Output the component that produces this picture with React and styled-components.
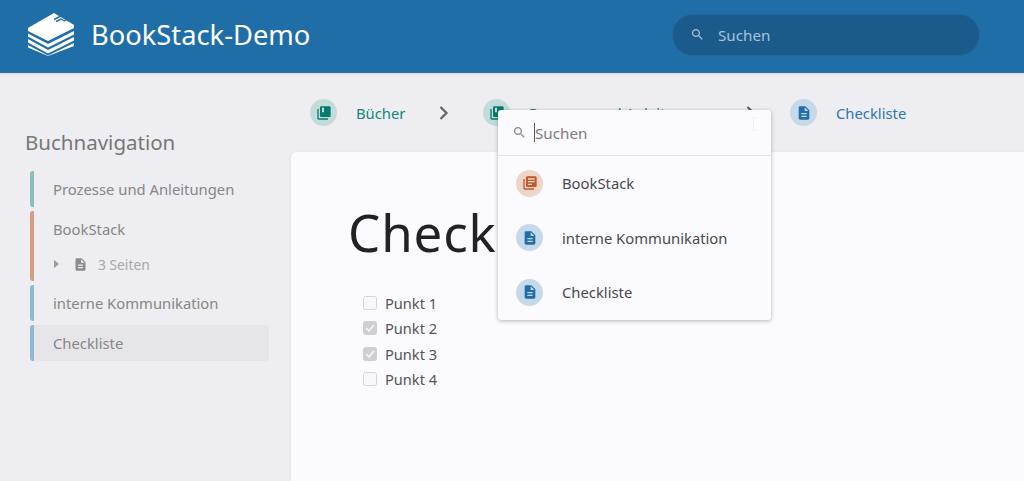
import React from "react";
import styled, { createGlobalStyle } from "styled-components";

const GlobalStyle = createGlobalStyle`
  html, body { margin: 0; padding: 0; height: 100%; overflow: hidden; }
  body {
    background: #eeedf2;
    font-family: "Noto Sans", "Open Sans", sans-serif;
    color: #444;
  }
`;

const PageIcon = () => (
  <svg viewBox="0 0 24 24" fill="currentColor">
    <path d="M14 2H6c-1.1 0-1.99.9-1.99 2L4 20c0 1.1.89 2 1.99 2H18c1.1 0 2-.9 2-2V8l-6-6zm2 16H8v-2h8v2zm0-4H8v-2h8v2zm-3-5V3.5L18.5 9H13z" />
  </svg>
);

const BookIcon = () => (
  <svg viewBox="0 0 24 24" fill="currentColor">
    <path d="M4 6H2v14c0 1.1.9 2 2 2h14v-2H4V6z" />
    <path d="M8 2h12c1.1 0 2 .9 2 2v12c0 1.1-.9 2-2 2H8c-1.1 0-2-.9-2-2V4c0-1.1.9-2 2-2zm1 2v7h3V4H9z" />
  </svg>
);

const ChapterIcon = () => (
  <svg viewBox="0 0 24 24" fill="currentColor">
    <path d="M4 6H2v14c0 1.1.9 2 2 2h14v-2H4V6zm16-4H8c-1.1 0-2 .9-2 2v12c0 1.1.9 2 2 2h12c1.1 0 2-.9 2-2V4c0-1.1-.9-2-2-2zm-1 9H9V9h10v2zm-4 4H9v-2h6v2zm4-8H9V5h10v2z" />
  </svg>
);

const SearchIcon = () => (
  <svg viewBox="0 0 24 24" fill="currentColor">
    <path d="M15.5 14h-.79l-.28-.27C15.41 12.59 16 11.11 16 9.5 16 5.91 13.09 3 9.5 3S3 5.91 3 9.5 5.91 16 9.5 16c1.61 0 3.09-.59 4.23-1.57l.27.28v.79l5 4.99L20.49 19l-4.99-5zm-6 0C7.01 14 5 11.99 5 9.5S7.01 5 9.5 5 14 7.01 14 9.5 11.99 14 9.5 14z" />
  </svg>
);

const Chevron = () => (
  <svg viewBox="0 0 12 16" fill="none" stroke="currentColor" strokeWidth="2.3">
    <path d="M2.5 2 8.5 8 2.5 14" />
  </svg>
);

const Logo = () => (
  <svg viewBox="0 0 46 43" width="46" height="43" fill="#fff">
    <path d="M0 15 26 0 46 12V15L20 28 0 18Z" />
    <path d="M26 6.5 35 2M28 8.5 33 6 36.5 8 39 5.5" fill="none" stroke="#206ea7" strokeWidth="1.4" />
    <path d="M0 20.5 20 31 46 18V21.5L20 34.5 0 23.5Z" />
    <path d="M0 26 20 37 46 24V27.5L20 40.5 0 29.5Z" />
    <path d="M0 32 20 42.5 46 30V33L20 43 0 34.5Z" />
  </svg>
);

const Header = styled.header`
  height: 73px;
  box-sizing: border-box;
  background: #206ea7;
  display: flex;
  align-items: center;
  padding: 0 0 4px 28px;
  box-shadow: 0 1px 3px 1px rgba(76, 76, 76, 0.1);
  position: relative;
  z-index: 2;
`;

const Brand = styled.div`
  display: flex;
  align-items: center;
  gap: 17px;
  width: 644px;
  color: #fff;
  font-size: 27.3px;
  line-height: 1;
`;

const HeaderSearch = styled.div`
  width: 308px;
  height: 42px;
  box-sizing: border-box;
  border-radius: 21px;
  background: #1a5b8b;
  border: 1px solid #24659a;
  display: flex;
  align-items: center;
  padding-left: 17px;
  gap: 13px;
  color: #a9c4d9;
  font-size: 15.2px;
  svg { width: 15px; height: 15px; }
`;

const Layout = styled.div`
  display: grid;
  grid-template-columns: 291px 1fr;
  height: 408px;
`;

const Sidebar = styled.aside`
  padding: 55px 22px 0 30px;
`;

const SideTitle = styled.h5`
  margin: 0 0 15px -5px;
  font-size: 20.5px;
  line-height: 28px;
  font-weight: 400;
  color: #777;
`;

const NavList = styled.div`
  display: flex;
  flex-direction: column;
  gap: 4px;
`;

const NavItem = styled.div`
  height: 36px;
  display: flex;
  align-items: center;
  padding-left: 19px;
  font-size: 14.8px;
  color: #868686;
  border-left: 4px solid ${(p) => p.$color};
  border-radius: 3px;
  background: ${(p) => (p.$active ? "#e6e5ea" : "transparent")};
`;

const NavGroup = styled.div`
  border-left: 4px solid #d59d82;
  border-radius: 3px;
`;

const GroupTitle = styled.div`
  height: 36px;
  display: flex;
  align-items: center;
  padding-left: 19px;
  font-size: 14.8px;
  color: #868686;
`;

const GroupChild = styled.div`
  height: 34px;
  display: flex;
  align-items: center;
  padding-left: 20px;
  font-size: 13.8px;
  color: #a8a8a8;
  svg { width: 15px; height: 15px; color: #8c8c8c; }
`;

const Caret = styled.span`
  width: 0;
  height: 0;
  border-top: 4px solid transparent;
  border-bottom: 4px solid transparent;
  border-left: 5px solid #999;
  margin-right: 14px;
`;

const ChildLabel = styled.span`
  margin-left: 10px;
`;

const Main = styled.main`
  display: flex;
  flex-direction: column;
  min-width: 0;
`;

const Breadcrumbs = styled.nav`
  height: 79px;
  box-sizing: border-box;
  display: flex;
  align-items: center;
  padding: 0 0 0 19px;
`;

const Crumb = styled.div`
  display: flex;
  align-items: center;
  gap: 19px;
  width: ${(p) => p.$width}px;
  color: ${(p) => p.$color};
  font-size: 14.8px;
  white-space: nowrap;
`;

const Separator = styled.span`
  width: ${(p) => p.$width}px;
  flex: none;
  svg { display: block; width: 12px; height: 16px; color: #666; }
`;

const IconBadge = styled.span`
  width: 27px;
  height: 27px;
  flex: none;
  border-radius: 50%;
  display: flex;
  align-items: center;
  justify-content: center;
  color: ${(p) => p.$color};
  background: ${(p) => p.$bg};
  svg { width: 16px; height: 16px; }
`;

const Card = styled.article`
  flex: 1;
  background: #fbfaff;
  border-radius: 6px 0 0 0;
  box-shadow: 0 1px 6px -1px rgba(0, 0, 0, 0.08);
  padding: 43px 0 0 57px;
`;

const Title = styled.h1`
  margin: 0 0 21px;
  font-size: 51px;
  letter-spacing: 0.9px;
  line-height: 74px;
  font-weight: 400;
  color: #222;
`;

const Tasks = styled.ul`
  list-style: none;
  margin: 0;
  padding: 0 0 0 15px;
`;

const Task = styled.li`
  height: 25.5px;
  display: flex;
  align-items: center;
  gap: 8px;
  font-size: 14.6px;
  color: #555;
`;

const CheckBox = styled.span`
  width: 14px;
  height: 14px;
  box-sizing: border-box;
  border-radius: 2.5px;
  border: 1px solid ${(p) => (p.$checked ? "#cfcfd2" : "#d4d4d7")};
  background: ${(p) => (p.$checked ? "#cfcfd2" : "#f8f8fa")};
  display: flex;
  align-items: center;
  justify-content: center;
  svg { width: 12px; height: 12px; }
`;

const Popup = styled.div`
  position: absolute;
  left: 498px;
  top: 110px;
  width: 273px;
  z-index: 5;
  background: #fbfaff;
  border-radius: 3px;
  box-shadow: 0 1px 4px 0 rgba(0, 0, 0, 0.28);
`;

const PopupSearch = styled.div`
  height: 46px;
  display: flex;
  align-items: center;
  padding: 0 0 0 14px;
  box-sizing: border-box;
  border-bottom: 1px solid #e4e3e8;
  font-size: 15.2px;
  color: #7b7b7b;
  svg { width: 15px; height: 15px; color: #888; }
`;

const TextCaret = styled.span`
  width: 1px;
  height: 19px;
  background: #555;
  margin: 0 0 0 7px;
`;

const MouseCursor = styled.svg`
  position: absolute;
  left: 252px;
  top: 7px;
  width: 7px;
  height: 14px;
`;

const PopupItem = styled.div`
  height: 54.6px;
  display: flex;
  align-items: center;
  gap: 19px;
  padding-left: 18px;
  font-size: 14.8px;
  color: #4a4a4a;
`;

const teal = { color: "#077b70", bg: "#c3dcd9" };
const orange = { color: "#bf5c2a", bg: "#eed5c9" };
const blue = { color: "#206ea7", bg: "#c5d9e8" };

export default function App() {
  return (
    <>
      <GlobalStyle />
      <Header>
        <Brand>
          <Logo />
          BookStack-Demo
        </Brand>
        <HeaderSearch>
          <SearchIcon />
          Suchen
        </HeaderSearch>
      </Header>
      <Layout>
        <Sidebar>
          <SideTitle>Buchnavigation</SideTitle>
          <NavList>
            <NavItem $color="#87c0b9">Prozesse und Anleitungen</NavItem>
            <NavGroup>
              <GroupTitle>BookStack</GroupTitle>
              <GroupChild>
                <Caret />
                <PageIcon />
                <ChildLabel>3 Seiten</ChildLabel>
              </GroupChild>
            </NavGroup>
            <NavItem $color="#8fb8d6">interne Kommunikation</NavItem>
            <NavItem $color="#8fb8d6" $active>Checkliste</NavItem>
          </NavList>
        </Sidebar>
        <Main>
          <Breadcrumbs>
            <Crumb $width={128} $color="#12877b">
              <IconBadge $color={teal.color} $bg={teal.bg}><BookIcon /></IconBadge>
              Bücher
            </Crumb>
            <Separator $width={45}><Chevron /></Separator>
            <Crumb $width={262} $color="#12877b">
              <IconBadge $color={teal.color} $bg={teal.bg}><BookIcon /></IconBadge>
              Prozesse und Anleitungen
            </Crumb>
            <Separator $width={45}><Chevron /></Separator>
            <Crumb $width={120} $color="#2a78b0">
              <IconBadge $color={blue.color} $bg={blue.bg}><PageIcon /></IconBadge>
              Checkliste
            </Crumb>
          </Breadcrumbs>
          <Card>
            <Title>Checkliste</Title>
            <Tasks>
              {[["Punkt 1", false], ["Punkt 2", true], ["Punkt 3", true], ["Punkt 4", false]].map(([label, checked]) => (
                <Task key={label}>
                  <CheckBox $checked={checked}>
                    {checked && (
                      <svg viewBox="0 0 12 12" fill="none" stroke="#f4f4f6" strokeWidth="1.8">
                        <path d="M2.2 6.2 5 9l4.8-6" />
                      </svg>
                    )}
                  </CheckBox>
                  {label}
                </Task>
              ))}
            </Tasks>
          </Card>
        </Main>
      </Layout>
      <Popup>
        <PopupSearch>
          <SearchIcon />
          <TextCaret />
          Suchen
        </PopupSearch>
        <MouseCursor viewBox="0 0 7 14" fill="none" stroke="#f0eff5" strokeWidth="1">
          <path d="M1 .5h2l.5.5.5-.5h2M3.500 1v12M1 13.500h2l.5-.5.5.5h2" />
        </MouseCursor>
        <PopupItem>
          <IconBadge $color={orange.color} $bg={orange.bg}><ChapterIcon /></IconBadge>
          BookStack
        </PopupItem>
        <PopupItem>
          <IconBadge $color={blue.color} $bg={blue.bg}><PageIcon /></IconBadge>
          interne Kommunikation
        </PopupItem>
        <PopupItem>
          <IconBadge $color={blue.color} $bg={blue.bg}><PageIcon /></IconBadge>
          Checkliste
        </PopupItem>
      </Popup>
    </>
  );
}
